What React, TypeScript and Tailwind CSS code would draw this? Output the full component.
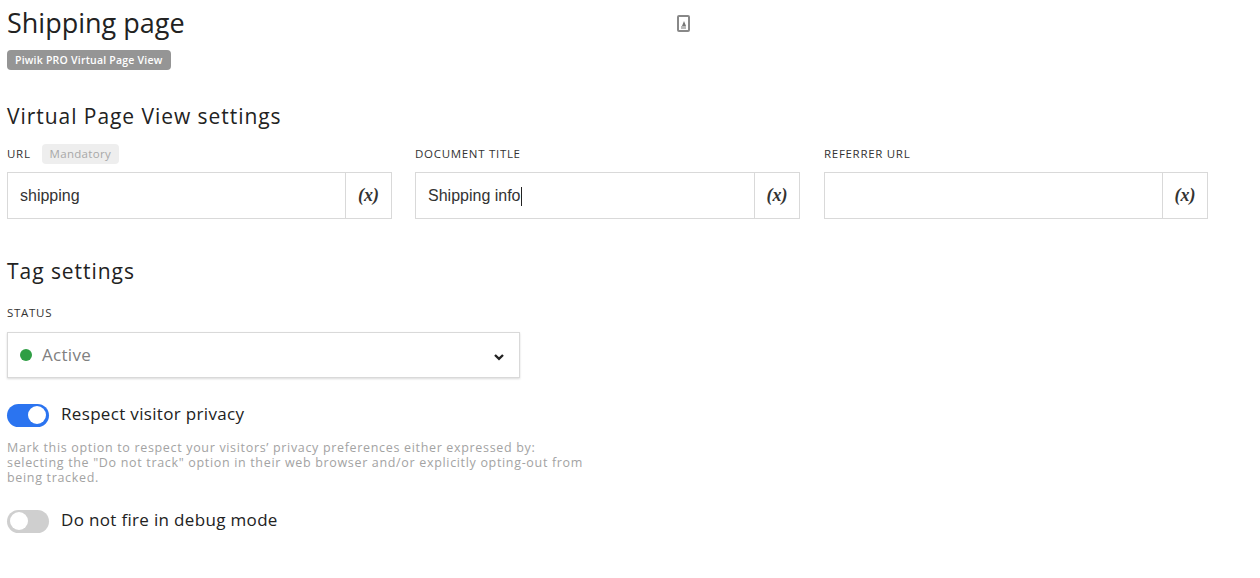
const sans = "font-['Open_Sans',sans-serif]"

function Field({ label, value, caret, mandatory, className, addon }: { label: string; value?: string; caret?: boolean; mandatory?: boolean; className: string; addon: string }) {
  return <div className={className}>
    <div className="h-[20px] flex items-center gap-[11px]">
      <span className="text-[11.5px] leading-[20px] tracking-[0.7px] text-[#333]">{label}</span>
      {mandatory && <span className="h-[20px] px-[8px] rounded-[4px] bg-[#eeeeee] text-[11.5px] leading-[20px] tracking-[0.3px] text-[#a8a8a8]">Mandatory</span>}
    </div>
    <div className="mt-[8px] h-[47px] flex border border-[#d9d9d9]">
      <div className="flex-1 px-[12px] pt-[1px] flex items-center font-['Liberation_Sans',sans-serif] text-[16px] text-[#333]">
        {value}
        {caret && <span className="inline-block w-px h-[19px] bg-[#222]"></span>}
      </div>
      <div className={addon + " border-l border-[#d9d9d9] flex items-center justify-center font-['Liberation_Serif',serif] italic font-bold text-[18px] text-[#333]"}>(x)</div>
    </div>
  </div>
}

function Toggle({ on, label }: { on?: boolean; label: string }) {
  return <div className="flex items-center h-[24px]">
    <div className={"w-[42px] h-[23px] rounded-full flex items-center px-[3px] " + (on ? "bg-[#2b74f0] justify-end" : "bg-[#cfcfcf] justify-start")}>
      <div className="w-[18px] h-[18px] rounded-full bg-white"></div>
    </div>
    <span className="ml-[12px] pb-[2px] text-[17px] tracking-[0.33px] text-[#222]">{label}</span>
  </div>
}

export default function App() {
  return <div className={"w-[1260px] h-[578px] bg-white overflow-hidden pl-[7px] relative " + sans}>
    <h1 className="pt-[4px] text-[27px] leading-[37px] text-[#222]">Shipping page</h1>
    <div className="absolute left-[677px] top-[15px] w-[13px] h-[17px] border-2 border-[#888] rounded-[2px] flex flex-col items-center justify-end pb-[1px]">
      <div className="w-0 h-0 border-x-[2.5px] border-x-transparent border-b-[5px] border-b-[#777]"></div>
      <div className="w-[5px] h-[3px] bg-[#bbb]"></div>
    </div>
    <div className="mt-[9px] inline-block h-[20px] px-[8px] rounded-[4px] bg-[#959595] text-[10.5px] leading-[20px] tracking-[0.22px] font-semibold text-white align-top">Piwik PRO Virtual Page View</div>
    <h2 className="mt-[31px] text-[21px] leading-[30px] tracking-[0.95px] text-[#222]">Virtual Page View settings</h2>
    <div className="mt-[13px] flex">
      <Field className="w-[385px]" addon="w-[46px]" label="URL" value="shipping" mandatory />
      <Field className="w-[385px] ml-[23px]" addon="w-[45px]" label="DOCUMENT TITLE" value="Shipping info" caret />
      <Field className="w-[384px] ml-[24px]" addon="w-[45px]" label="REFERRER URL" />
    </div>
    <h2 className="mt-[37px] text-[21px] leading-[30px] tracking-[0.95px] text-[#222]">Tag settings</h2>
    <div className="mt-[17px] h-[20px] text-[11.5px] leading-[20px] tracking-[0.7px] text-[#333]">STATUS</div>
    <div className="mt-[9px] w-[513px] h-[46px] border border-[#d9d9d9] shadow-[0_1px_2px_rgba(0,0,0,0.15)] flex items-center px-[12px]">
      <span className="w-[12px] h-[12px] rounded-full bg-[#2f9e44]"></span>
      <span className="ml-[10px] text-[17px] tracking-[0.3px] text-[#808080]">Active</span>
      <svg className="ml-auto mr-[2px] mt-[3px]" width="12" height="12" viewBox="0 0 12 12" fill="none"><path d="M2 4l4 3.8L10 4" stroke="#222" strokeWidth="2.4"/></svg>
    </div>
    <div className="mt-[25px]"><Toggle on label="Respect visitor privacy" /></div>
    <p className="mt-[13px] w-[590px] text-[12.5px] leading-[15px] tracking-[0.67px] text-[#a3a3a3]">
      Mark this option to respect your visitors’ privacy preferences either expressed by:<br />
      selecting the "Do not track" option in their web browser and/or explicitly opting-out from<br />
      being tracked.
    </p>
    <div className="mt-[24px]"><Toggle label="Do not fire in debug mode" /></div>
  </div>
}
